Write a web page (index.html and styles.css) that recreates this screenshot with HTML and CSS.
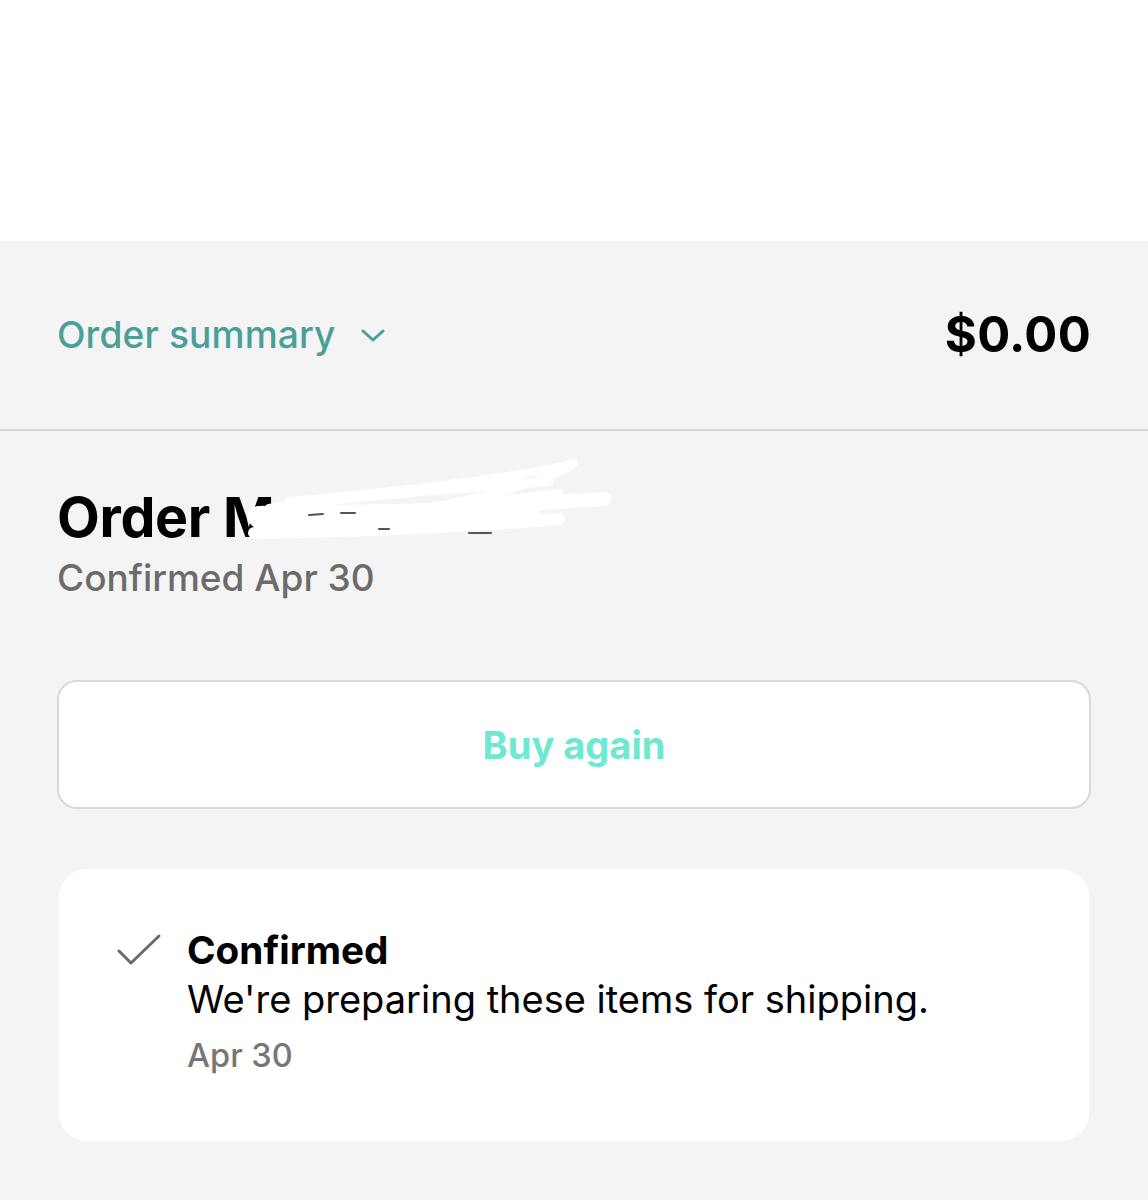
FILE: index.html
```html
<!DOCTYPE html>
<html lang="en">
<head>
<meta charset="utf-8">
<title>Order</title>
<link rel="stylesheet" href="styles.css">
</head>
<body>
<div class="top"></div>
<div class="summary">
  <div class="summary-toggle">
    <span>Order summary</span>
    <svg class="chev" width="24" height="14" viewBox="0 0 24 14"><path d="M2 2 L12 11 L22 2" fill="none" stroke="#4a9f98" stroke-width="3" stroke-linecap="round" stroke-linejoin="round"/></svg>
  </div>
  <div class="total">$0.00</div>
</div>
<main class="main">
  <div class="title-wrap">
    <h1 class="title">Order M</h1>
    <svg class="scribble" width="400" height="100" viewBox="0 0 400 100"><g fill="none" stroke="#fff" stroke-linecap="round" stroke-linejoin="round"><path d="M40 58 C120 44 200 40 320 30" stroke-width="10"/><path d="M30 68 C140 64 280 54 375 48" stroke-width="14"/><path d="M25 82 C150 80 260 74 330 68" stroke-width="12"/><path d="M60 50 C180 40 300 24 345 12 C330 30 200 62 90 74" stroke-width="8"/><path d="M30 66 L300 62" stroke-width="22"/><path d="M40 76 L270 72" stroke-width="14"/><path d="M200 56 L330 42" stroke-width="8"/></g><g stroke="#555" stroke-width="2" stroke-linecap="round"><path d="M80 64 L94 63"/><path d="M112 62 L126 62"/><path d="M150 78 L160 78"/><path d="M240 82 L262 82"/></g></svg>
  </div>
  <div class="subtitle">Confirmed Apr 30</div>
  <button class="buy">Buy again</button>
  <section class="card">
    <svg class="check" width="46" height="34" viewBox="0 0 46 34"><path d="M3 18 L15 30 L43 3" fill="none" stroke="#6b6b6b" stroke-width="3" stroke-linecap="round" stroke-linejoin="round"/></svg>
    <div class="status">
      <div class="status-title">Confirmed</div>
      <div class="status-text">We're preparing these items for shipping.</div>
      <div class="status-date">Apr 30</div>
    </div>
  </section>
</main>
</body>
</html>
```
FILE: styles.css
```css
* { box-sizing: border-box; }
html, body { margin: 0; padding: 0; }
body {
  background: #f4f4f4;
  font-family: Inter, "Noto Sans", sans-serif;
  color: #000;
  height: 1200px;
  overflow: hidden;
}
.top { height: 241px; background: #fff; }
.summary {
  height: 190px;
  display: flex;
  align-items: center;
  justify-content: space-between;
  padding: 0 57px 2px 57px;
  border-bottom: 2px solid #d6d6d6;
}
.summary-toggle {
  display: flex;
  align-items: center;
  gap: 25px;
  color: #4a9f98;
  font-size: 37.2px;
  font-weight: 500;
  letter-spacing: 0.1px;
}
.chev { margin-top: 4px; }
.total {
  font-size: 49px;
  font-weight: 700;
  letter-spacing: 0.3px;
}
.main { padding: 54px 57px 0 57px; }
.title-wrap { position: relative; }
.title {
  margin: 0;
  font-size: 55.5px;
  font-weight: 700;
  line-height: 64px;
  letter-spacing: -0.3px;
  white-space: nowrap;
}
.scribble { position: absolute; left: 172px; top: -34px; }
.subtitle {
  margin-top: 6px;
  font-size: 37px;
  line-height: 46px;
  color: #6b6b6b;
  font-weight: 500;
}
.buy {
  display: block;
  width: 100%;
  height: 129px;
  margin-top: 79px;
  background: #fff;
  border: 2px solid #d9d9d9;
  border-radius: 20px;
  font-family: inherit;
  font-size: 38px;
  font-weight: 700;
  color: #6ee8cf;
  padding: 0;
}
.card {
  margin: 60px 2px 0 2px;
  background: #fff;
  border-radius: 28px;
  height: 272px;
  display: flex;
  align-items: flex-start;
  padding: 58px 0 0 57px;
  gap: 25px;
}
.check { margin-top: 6px; flex-shrink: 0; }
.status-title { font-size: 38.7px; font-weight: 700; line-height: 46px; }
.status-text { font-size: 38px; line-height: 52px; font-weight: 400; }
.status-date { font-size: 32.5px; line-height: 50px; color: #767676; font-weight: 500; margin-top: 6px; }
```
